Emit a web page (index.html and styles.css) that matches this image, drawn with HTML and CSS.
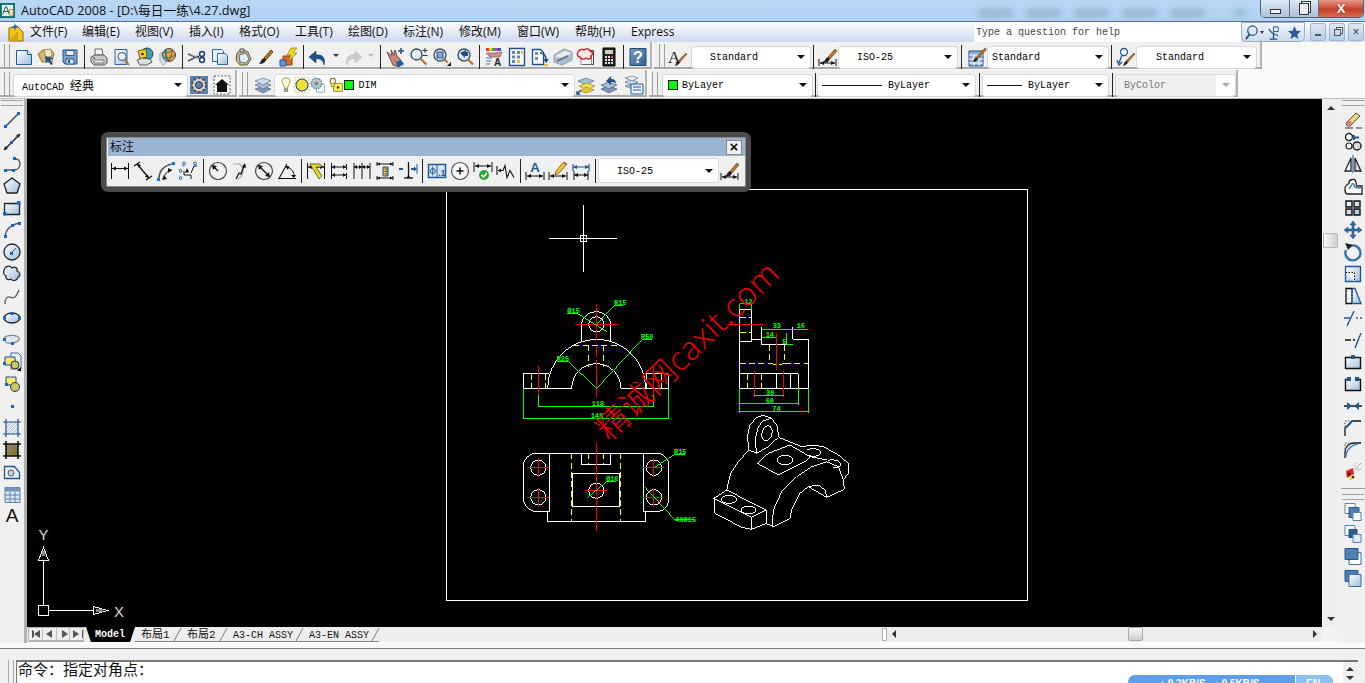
FILE: index.html
```html
<!DOCTYPE html>
<html lang="zh">
<head>
<meta charset="utf-8">
<title>AutoCAD 2008 - [D:\每日一练\4.27.dwg]</title>
<link rel="stylesheet" href="styles.css">
</head>
<body>
<svg class="defs" aria-hidden="true">
<defs>
<linearGradient id="gb" x1="0" y1="0" x2="1" y2="1"><stop offset="0" stop-color="#fff"/><stop offset="1" stop-color="#9dbcdb"/></linearGradient>
<linearGradient id="gy" x1="0" y1="0" x2="1" y2="1"><stop offset="0" stop-color="#fff7b0"/><stop offset="1" stop-color="#e0b820"/></linearGradient>
<linearGradient id="gd" x1="0" y1="0" x2="1" y2="1"><stop offset="0" stop-color="#7f9cbc"/><stop offset="1" stop-color="#2f5f94"/></linearGradient>
<symbol id="new" viewBox="0 0 20 20"><path d="M2.500 3.500h11l4 4v10h-15z" fill="url(#gb)" stroke="#1f5a96"/><path d="M13.500 3.500v4h4" fill="#fff" stroke="#1f5a96"/></symbol>
<symbol id="open" viewBox="0 0 20 20"><path d="M1 7l5-4h8l3 3-2 9H5z" fill="#d8b56c" stroke="#8d7443"/><path d="M7 3l7-1 1 7-6 2z" fill="#f3e7c4" stroke="#a5905c"/><path d="M8 9l8 2-3 2 3 4-2 1-3-4-2 2z" fill="#1f4f88"/></symbol>
<symbol id="save" viewBox="0 0 20 20"><path d="M3 3h14v14H5l-2-2z" fill="#7fa4cc" stroke="#27578f"/><path d="M6 3.500h8v5H6z" fill="#e8f0f8" stroke="#27578f"/><path d="M6 12h8v5H6z" fill="#dce6f0" stroke="#27578f"/><path d="M8 13h2v3H8z" fill="#27578f"/></symbol>
<symbol id="print" viewBox="0 0 20 20"><path d="M6 2h7l1 6H6z" fill="#f4f4f4" stroke="#666"/><path d="M2 10l4-2h9l3 3v5l-3 2H5l-3-3z" fill="#c6c8cc" stroke="#555"/><path d="M5 13h10v3H5z" fill="#ececec" stroke="#777"/><path d="M4 11h2" stroke="#333"/></symbol>
<symbol id="preview" viewBox="0 0 20 20"><path d="M3 2.500h12v15H3z" fill="url(#gb)" stroke="#2d679f"/><circle cx="10" cy="9.500" r="4" fill="#e4f0fa" stroke="#555"/><path d="M13 13l4 5" stroke="#b4722e" stroke-width="2"/></symbol>
<symbol id="publish" viewBox="0 0 20 20"><circle cx="12" cy="7" r="6" fill="#39a0b8" stroke="#245"/><path d="M3 4l8-2 1 8-7 2z" fill="#f5d020" stroke="#6d5a10"/><path d="M2 13l5-2 8 1 2 3-5 3H5z" fill="#dadde2" stroke="#555"/><circle cx="7.500" cy="7" r="1.300" fill="#333"/></symbol>
<symbol id="web" viewBox="0 0 20 20"><path d="M2 6l6-1v11l-3 2-3-4z" fill="#d8dfe8" stroke="#9ab"/><circle cx="11" cy="8" r="6.500" fill="#f0a030" stroke="#347"/><path d="M6 5c3 1 7 0 9-2M5 10c4 2 8 1 12-2" stroke="#2aa34a" stroke-width="1.500" fill="none"/><path d="M8 2c-1 4 0 9 3 12" stroke="#2a5fd0" stroke-width="1.500" fill="none"/><path d="M14 3c0 4-1 8-3 11" stroke="#d03030" fill="none"/></symbol>
<symbol id="cut" viewBox="0 0 20 20"><path d="M1 7l10 4M1 14l10-5" stroke="#555" stroke-width="1.500"/><path d="M2 6.500l9 4" stroke="#aaa"/><circle cx="15" cy="7" r="2.500" fill="none" stroke="#1e3f72" stroke-width="1.500"/><circle cx="15" cy="13" r="2.500" fill="none" stroke="#1e3f72" stroke-width="1.500"/><path d="M11 10l2-2M11 10l2 2" stroke="#1e3f72"/></symbol>
<symbol id="copy" viewBox="0 0 20 20"><path d="M2.500 2.500h9l2 2v10h-11z" fill="#eaf1f8" stroke="#2d679f"/><path d="M7.500 6.500h8l2 2v9h-10z" fill="url(#gb)" stroke="#2d679f"/></symbol>
<symbol id="paste" viewBox="0 0 20 20"><path d="M4 6l5-4 6 3 3 7-4 6-7 0-4-5z" fill="#d9b875" stroke="#5f5740"/><path d="M6 8l7-2 3 6-3 4-6-1z" fill="#dfeefa" stroke="#4878a8"/><path d="M7 2h4v3H7z" fill="#ccc" stroke="#555"/></symbol>
<symbol id="match" viewBox="0 0 20 20"><path d="M15 3l2 2-7 8-2-2z" fill="#b8742c" stroke="#6b3e10"/><path d="M8 11l2 2c-1 3-4 4-7 4 2-2 2-5 5-6z" fill="#222"/></symbol>
<symbol id="block" viewBox="0 0 20 20"><path d="M4 9h9v9H4z" fill="#e86a20" stroke="#8b3a10"/><path d="M1 13h6v6H1z" fill="#5b9be0" stroke="#1f4f88"/><path d="M12 1l6 0-4 5 4 0-9 9 3-7-4 0z" fill="#f5d820" stroke="#7a6a10" stroke-width=".6"/></symbol>
<symbol id="undo" viewBox="0 0 20 20"><path d="M16 18c2-6-1-11-8-10V4L1 10l7 6v-4c4-1 7 1 8 6z" fill="#1f4f88" stroke="#14365e" stroke-width=".5"/></symbol>
<symbol id="redo" viewBox="0 0 20 20"><path d="M4 18c-2-6 1-11 8-10V4l7 6-7 6v-4c-4-1-7 1-8 6z" fill="#c9cdd2" stroke="#b0b4b8" stroke-width=".5"/></symbol>
<symbol id="pan" viewBox="0 0 20 20"><path d="M1 5l5 4-1-6 3 5 1-5 2 6 3 3 2 5-3 3-6-2z" fill="#c8857a" stroke="#7d4a44"/><path d="M15 1v6M12 4h6" stroke="#1f4f88" stroke-width="1.500"/><path d="M10 15l5-2 3 4-3 2h-4z" fill="#1f5f9f"/></symbol>
<symbol id="zrt" viewBox="0 0 20 20"><circle cx="7.500" cy="7.500" r="5.500" fill="#dcecf8" stroke="#3a4a5a" stroke-width="1.300"/><path d="M11.500 11.500l6 6" stroke="#b4722e" stroke-width="2.200"/><path d="M16 1v5M13.500 3.500h5M13.500 8.500h5" stroke="#333"/></symbol>
<symbol id="zwin" viewBox="0 0 20 20"><circle cx="8" cy="8" r="6" fill="#dcecf8" stroke="#3a4a5a" stroke-width="1.300"/><path d="M5 5h6v6H5z" fill="#8aa8c8" stroke="#1f4f88"/><path d="M12.500 12.500l3 3" stroke="#b4722e" stroke-width="2.200"/><path d="M19 15v4h-4z" fill="#111"/></symbol>
<symbol id="zprev" viewBox="0 0 20 20"><circle cx="9" cy="8" r="6" fill="#dcecf8" stroke="#3a4a5a" stroke-width="1.300"/><path d="M13 12.500l5 5" stroke="#b4722e" stroke-width="2.200"/><path d="M5 6l6-3v2h2v4h-3v2z" fill="#1f4f88"/></symbol>
<symbol id="props" viewBox="0 0 20 20"><path d="M2 1h3v3H2z" fill="#e03030"/><path d="M5 1h3v3H5z" fill="#e0d020"/><path d="M8 1h3v3H8z" fill="#30b030"/><path d="M11 1h3v3h-3z" fill="#d030c0"/><path d="M14 1h3v3h-3z" fill="#3050d0"/><path d="M2 6h9l7-1-2 5H6z" fill="#d09088" stroke="#7d4a44" stroke-width=".6"/><path d="M2 11h6M2 14h5M2 17h4" stroke="#3a7ab0"/><text x="10" y="19" class="ict">A</text></symbol>
<symbol id="dc" viewBox="0 0 20 20"><path d="M2.500 1.500h15v17h-15z" fill="#fff" stroke="#1f4f88" stroke-width="1.400"/><path d="M5 4h3v3H5zM10 4h3v3h-3zM5 8.500h3v3H5zM10 8.500h3v3h-3zM5 13h3v3H5z" fill="#5e86b4"/><path d="M10 13h3v3h-3zM14 4h2v3h-2z" fill="#e8c020"/></symbol>
<symbol id="tool" viewBox="0 0 20 20"><path d="M2.500 2.500h8l3 3v12h-11z" fill="#fff" stroke="#1f4f88" stroke-width="1.300"/><path d="M5 5h3v3H5zM5 10h3v3H5z" fill="#6e90b8"/><path d="M10 6c4 0 6 3 6 7" fill="none" stroke="#1f4f88" stroke-width="1.500"/><path d="M13 12h6l-3 4z" fill="#1f4f88"/><path d="M14 17h4v2h-4z" fill="#e8c020"/></symbol>
<symbol id="sheet" viewBox="0 0 20 20"><path d="M1 8l10-6 8 3v8l-10 5-8-3z" fill="#b8c2cc" stroke="#8b97a3"/><path d="M2 9l10-5 6 2-9 5z" fill="#e8edf2"/><path d="M4 14l11-5" stroke="#6d7a87" stroke-width="2"/><path d="M6 17l12-6" stroke="#9ec0dc" stroke-width="2"/></symbol>
<symbol id="markup" viewBox="0 0 20 20"><path d="M7 3.500h10.500v14H7z" fill="#f4f4f4" stroke="#444"/><path d="M5 5.500h10.500v12H5z" fill="#fff" stroke="#444" stroke-width=".6"/><path d="M2 5c1-3 5-3 6-2 2-2 6-1 6 1 3 0 3 4 1 5 1 3-3 4-5 2-2 2-6 1-6-1-3 0-3-3-2-5z" fill="#fbe8e8" stroke="#d82020" stroke-width="1.400"/></symbol>
<symbol id="calc" viewBox="0 0 20 20"><path d="M4 1h12v18H4z" fill="#222" stroke="#000"/><path d="M6 3h8v4H6z" fill="#c4d8b8"/><path d="M6 9h2v2H6zM9 9h2v2H9zM6 12h2v2H6zM9 12h2v2H9zM6 15h2v2H6zM9 15h2v2H9zM12 12h2v2h-2zM12 15h2v2h-2z" fill="#ddd"/><path d="M12 9h2v2h-2z" fill="#e04030"/></symbol>
<symbol id="help" viewBox="0 0 20 20"><path d="M2 1.500h16v17H2z" fill="url(#gd)" stroke="#1d4a7c"/><text x="10" y="16" class="ich">?</text></symbol>
<symbol id="tstyle" viewBox="0 0 20 20"><text x="0" y="16" class="ita">A</text><path d="M18 6l1 1-7 8-2-1z" fill="#b8742c" stroke="#6b3e10" stroke-width=".5"/><path d="M10 14l2 1c-1 3-3 3-5 4 1-2 1-4 3-5z" fill="#222"/></symbol>
<symbol id="dstyle" viewBox="0 0 20 20"><path d="M1 12v7M18 12v7M2 16h15" stroke="#111"/><path d="M2 16l4-2v4zM17 16l-4-2v4z" fill="#111"/><path d="M17 2l2 2-7 8-2-2z" fill="#b8742c" stroke="#6b3e10" stroke-width=".6"/><path d="M10 10l2 2c-1 3-4 4-7 4 2-2 2-5 5-6z" fill="#222"/></symbol>
<symbol id="tbst" viewBox="0 0 20 20"><path d="M2 4h14v15H2z" fill="#8fb0d4" stroke="#1f4f88"/><path d="M2 8h14M2 12h14M2 16h14M7 8v11M12 8v11" stroke="#fff"/><path d="M18 1l1.500 1.500-8 9-2-1.500z" fill="#b8742c" stroke="#6b3e10" stroke-width=".6"/><path d="M9 10.500l2 1.500c-1 2-3 3-5 3 1-2 1-4 3-4.500z" fill="#222"/></symbol>
<symbol id="mlst" viewBox="0 0 20 20"><circle cx="8" cy="5" r="3.500" fill="#fff" stroke="#1f5a96" stroke-width="1.300"/><path d="M6 8l-3 8M1 13l2 5 3-3" fill="none" stroke="#1f5a96" stroke-width="1.300"/><path d="M18 6l1 1-7 8-2-1z" fill="#b8742c" stroke="#6b3e10" stroke-width=".6"/><path d="M10 14l2 1c-1 3-3 3-5 4 1-2 1-4 3-5z" fill="#222"/></symbol>
<symbol id="gear" viewBox="0 0 20 20"><path d="M1 1h18v18H1z" fill="#5b83ad"/><circle cx="10" cy="10" r="7" fill="#d9d9d9" stroke="#555" stroke-width="2" stroke-dasharray="3 1.500"/><circle cx="10" cy="10" r="3.500" fill="#5b83ad" stroke="#333"/></symbol>
<symbol id="lock" viewBox="0 0 20 20"><path d="M2 1h16v18H2z" fill="#fff" stroke="#555" stroke-dasharray="2 1.500"/><path d="M10 4l7 6h-2v7H5v-7H3z" fill="#111"/></symbol>
<symbol id="layers" viewBox="0 0 20 20"><path d="M10 11l8 3-8 4-8-4z" fill="#7e99b8" stroke="#44617e" stroke-width=".6"/><path d="M10 7l8 3-8 4-8-4z" fill="#a8bdd4" stroke="#44617e" stroke-width=".6"/><path d="M10 3l8 3-8 4-8-4z" fill="#cfdbe8" stroke="#44617e" stroke-width=".6"/></symbol>
<symbol id="bulb" viewBox="0 0 20 20"><path d="M10 1c4 0 5 3 5 5 0 3-3 4-3 8H8c0-4-3-5-3-8 0-2 1-5 5-5z" fill="#fffbe0" stroke="#a89020" stroke-width="1.200"/><path d="M8 15h4v3H8z" fill="#ccc" stroke="#666"/></symbol>
<symbol id="sun" viewBox="0 0 20 20"><path d="M1 1h18v18H1z" fill="#fff" stroke="#c8b020" stroke-dasharray="2 2"/><circle cx="10" cy="10" r="7.500" fill="#f8df38" stroke="#1f4f88" stroke-width="1.300"/></symbol>
<symbol id="freeze" viewBox="0 0 20 20"><path d="M8 9h10v10H8z" fill="#fff" stroke="#7b94ad"/><circle cx="8" cy="8" r="6.500" fill="#c2cbb8" stroke="#5f8fbd" stroke-width="2" stroke-dasharray="2 1"/><circle cx="8" cy="8" r="2.500" fill="#5f8fbd"/></symbol>
<symbol id="padlock" viewBox="0 0 20 20"><path d="M3 8V4c0-3 6-3 6 0v4" fill="none" stroke="#8a7a10" stroke-width="1.500"/><path d="M7 8h11v10H7z" fill="#f8e858" stroke="#8a7a10"/><path d="M4 8h4v4H4z" fill="#f8e858" stroke="#8a7a10"/><circle cx="12.500" cy="13" r="1.500" fill="#333"/></symbol>
<symbol id="lyrprev" viewBox="0 0 20 20"><path d="M10 3l8 3-8 4-8-4z" fill="#a8bdd4" stroke="#44617e" stroke-width=".6"/><path d="M11 8l8 3-8 4-8-4z" fill="#f2dc50" stroke="#8a7a10" stroke-width=".6"/><path d="M10 12l8 3-8 3-6-2z" fill="#e8c828" stroke="#8a7a10" stroke-width=".6"/><path d="M1 19l4-4M1 16v3h3" stroke="#1f4f88" stroke-width="1.300" fill="none"/></symbol>
<symbol id="lyrst" viewBox="0 0 20 20"><path d="M9 11l8 3-8 4-8-4z" fill="#7e99b8" stroke="#33485e" stroke-width=".6"/><path d="M9 7l8 3-8 4-8-4z" fill="#a8bdd4" stroke="#33485e" stroke-width=".6"/><path d="M6 6l5-5v3c4 0 5 2 5 5-1-2-3-2-5-2v3z" fill="#1f4f88"/></symbol>
<symbol id="lyrw" viewBox="0 0 20 20"><path d="M8 9l6 2-6 3-7-3z" fill="#a8bdd4" stroke="#44617e" stroke-width=".6"/><path d="M8 5l6 2-6 3-7-3z" fill="#cfdbe8" stroke="#44617e" stroke-width=".6"/><path d="M8 1l6 2-6 3-7-3z" fill="#e8eef5" stroke="#44617e" stroke-width=".6"/><path d="M7 9h12v10H7z" fill="#eaf1f8" stroke="#1f5a96"/><path d="M9 12h8M9 15h8" stroke="#1f5a96"/></symbol>

<symbol id="dl" viewBox="0 0 20 20"><path d="M1.500 2v16M18.500 2v16M2 7.500h16" stroke="#111" fill="none"/><path d="M2 7.500l4-2v4zM18 7.500l-4-2v4z" fill="#111"/></symbol>
<symbol id="da" viewBox="0 0 20 20"><path d="M1 5l6-4M13 19l6-4M4 3l12 14" stroke="#111" stroke-width="1.300"/><path d="M4 3l4 1-2 3zM16 17l-4-1 2-3z" fill="#111"/></symbol>
<symbol id="dar" viewBox="0 0 20 20"><path d="M3 18C3 10 8 4 17 3" fill="none" stroke="#555" stroke-width="1.600"/><path d="M8 18c0-5 3-8 8-9" fill="none" stroke="#111"/><path d="M6 19l2-5 3 4zM16 9l-4-2v5z" fill="#111"/><path d="M16 1h3v3h-3zM1 17h3v3H1z" fill="#1677d2"/></symbol>
<symbol id="dord" viewBox="0 0 20 20"><path d="M12 12l3-7 3 0M5 10v4h7v4" fill="none" stroke="#111"/><path d="M8 7l2 4-4 1z" fill="#111"/><text x="3" y="6" class="ict2">x</text><circle cx="5" cy="2.500" r="1.400" fill="none" stroke="#1f5fa8"/><circle cx="16" cy="2.500" r="1.400" fill="none" stroke="#1f5fa8"/><circle cx="1.500" cy="10" r="1.400" fill="none" stroke="#1f5fa8"/><circle cx="1.500" cy="17" r="1.400" fill="none" stroke="#1f5fa8"/></symbol>
<symbol id="drad" viewBox="0 0 20 20"><circle cx="10" cy="10" r="8.500" fill="#f3f3f3" stroke="#444" stroke-width="1.200"/><path d="M10 10L5 5" stroke="#111" stroke-width="1.300"/><path d="M4 4l5 1-4 4z" fill="#111"/></symbol>
<symbol id="djog" viewBox="0 0 20 20"><path d="M7 2a9 9 0 0 1 0 16" fill="none" stroke="#bbb" stroke-width="1.500"/><path d="M5 18l3-6 2 1 3-8" fill="none" stroke="#111" stroke-width="1.300"/><path d="M14 2l1 5-4-1z" fill="#111"/><path d="M2 3h6" stroke="#bbb"/></symbol>
<symbol id="ddia" viewBox="0 0 20 20"><circle cx="10" cy="10" r="8.500" fill="#f3f3f3" stroke="#444" stroke-width="1.200"/><path d="M5 5l10 10" stroke="#111" stroke-width="1.300"/><path d="M4 4l5 1-4 4zM16 16l-5-1 4-4z" fill="#111"/></symbol>
<symbol id="dang" viewBox="0 0 20 20"><path d="M1 17.500h18M2 17.500L10 3" stroke="#111" fill="none" stroke-width="1.100"/><path d="M10 6a9 9 0 0 1 7 10" fill="none" stroke="#111"/><path d="M8 5l4 0-1 4zM17 17l-3-3h5z" fill="#111"/></symbol>
<symbol id="dq" viewBox="0 0 20 20"><path d="M1.500 2v16M18.500 2v16M2 6h16" stroke="#111" fill="none"/><path d="M2 6l4-2v4zM18 6l-4-2v4z" fill="#111"/><path d="M4 3l9 15 3-3-6-9h6l-2-3z" fill="#f0d818" stroke="#333" stroke-width=".7"/></symbol>
<symbol id="dbase" viewBox="0 0 20 20"><path d="M2.500 2v16M17.500 3v6M17.500 12v6M3 6h14M3 14h14" stroke="#111" fill="none"/><path d="M3 6l3-2v4zM17 6l-3-2v4zM3 14l3-2v4zM17 14l-3-2v4z" fill="#111"/></symbol>
<symbol id="dcont" viewBox="0 0 20 20"><path d="M2 2v16M10 2v16M18 2v16M2 6h16" stroke="#111" fill="none"/><path d="M2 6l3-2v4zM10 6l-3-2v4zM10 6l3-2v4zM18 6l-3-2v4z" fill="#111"/></symbol>
<symbol id="dsp" viewBox="0 0 20 20"><path d="M2 3h16M2 17h16M2 1v4M18 1v4M2 15v4M18 15v4" stroke="#111" fill="none"/><path d="M2 3l3-1.500v3zM18 3l-3-1.500v3zM2 17l3-1.500v3zM18 17l-3-1.500v3z" fill="#111"/><path d="M8 6h5v9H8z" fill="#e8b838" stroke="#1f4f88"/><path d="M10 8h3M10 10.500h3M10 13h3" stroke="#1f4f88"/></symbol>
<symbol id="dbrk" viewBox="0 0 20 20"><path d="M10.500 1v15" stroke="#111" stroke-width="1.300"/><path d="M6 17h9" stroke="#111" stroke-width="1.300"/><path d="M10.500 14l-2 3h4z" fill="#111"/><path d="M1 8h4" stroke="#1f5a96" stroke-width="2"/><path d="M13 8h4" stroke="#1f5a96" stroke-width="2"/><path d="M19 8l-3-2.500v5z" fill="#1f5a96"/><path d="M19 3v10" stroke="#1f5a96"/></symbol>
<symbol id="dtol" viewBox="0 0 20 20"><path d="M1.500 3.500h17v13h-17z" fill="#d8e6f3" stroke="#1f5a96" stroke-width="1.500"/><path d="M10 4v12" stroke="#1f5a96"/><circle cx="5.700" cy="10" r="2.500" fill="none" stroke="#1f5a96"/><path d="M5.700 5.500v9" stroke="#1f5a96"/><text x="11" y="14.500" class="ict3">.1</text></symbol>
<symbol id="dcen" viewBox="0 0 20 20"><circle cx="10" cy="10" r="8.500" fill="#f6f6f6" stroke="#555" stroke-width="1.200"/><path d="M10 6.500v7M6.500 10h7" stroke="#111" stroke-width="1.500"/></symbol>
<symbol id="dins" viewBox="0 0 20 20"><path d="M1 1v10M19 1v10M2 5h16" stroke="#111"/><path d="M2 5l4-2v4zM18 5l-4-2v4z" fill="#111"/><circle cx="11" cy="14" r="5" fill="#2fa838"/><path d="M8.500 14l2 2 3.500-4" stroke="#fff" stroke-width="1.500" fill="none"/></symbol>
<symbol id="djl" viewBox="0 0 20 20"><path d="M1 5v9M2 9.500h5l2-5 2 12 3-7 4 7" fill="none" stroke="#111" stroke-width="1.100"/><path d="M2 9.500l3-2v4z" fill="#111"/></symbol>
<symbol id="dtxt" viewBox="0 0 20 20"><text x="10" y="11" class="idt">A</text><path d="M1 11v8M19 11v8M2 15h16" stroke="#111"/><path d="M2 15l4-2v4zM18 15l-4-2v4z" fill="#111"/></symbol>
<symbol id="dedit" viewBox="0 0 20 20"><path d="M1 11v8M19 11v8M2 15h16" stroke="#111"/><path d="M2 15l4-2v4zM18 15l-4-2v4z" fill="#111"/><path d="M16 1l3 2-8 9-4 2 1-4z" fill="#f0cc30" stroke="#704018" stroke-width=".8"/><path d="M16 1l3 2-1 1-3-2z" fill="#d05040"/></symbol>
<symbol id="dupd" viewBox="0 0 20 20"><path d="M2 3v7M18 3v7M2 6h16" stroke="#1f5a96" stroke-width="1.200"/><path d="M2 6l4-2v4zM18 6l-4-2v4z" fill="#1f5a96"/><path d="M3 10v9M17 10v9M3 14h14" stroke="#111"/><path d="M3 14l4-2v4zM17 14l-4-2v4z" fill="#111"/></symbol>

<symbol id="line" viewBox="0 0 20 20"><path d="M4 16L16 4" stroke="#444" stroke-width="1.400"/><path d="M2 15h3v3H2zM15 2h3v3h-3z" fill="#1167c8"/></symbol>
<symbol id="xline" viewBox="0 0 20 20"><path d="M2 18L18 2" stroke="#222" stroke-width="1.400"/><path d="M2 18l1-4 3 3zM18 2l-4 1 3 3z" fill="#222"/><path d="M8 9h3v3H8z" fill="#1167c8"/></symbol>
<symbol id="pline" viewBox="0 0 20 20"><path d="M3 16h9c3 0 6-2 6-6s-3-5-5-5" fill="none" stroke="#555" stroke-width="1.300"/><path d="M2 15h3v3H2zM10 15h3v3h-3zM11 3h3v3h-3z" fill="#1167c8"/></symbol>
<symbol id="poly" viewBox="0 0 20 20"><path d="M10 2l8 6-3 9H5L2 8z" fill="url(#gb)" stroke="#222" stroke-width="1.300"/></symbol>
<symbol id="rect" viewBox="0 0 20 20"><path d="M2.500 5.500h15v11h-15z" fill="url(#gb)" stroke="#222" stroke-width="1.300"/><path d="M15 3h3.500v3.500H15zM1 14h3.500v3.500H1z" fill="#1167c8"/></symbol>
<symbol id="arc" viewBox="0 0 20 20"><path d="M3 18C3 10 9 5 17 3" fill="none" stroke="#555" stroke-width="1.300"/><path d="M2 15h3v3H2zM9 4h3v3H9zM16 2h3v3h-3z" fill="#1167c8"/></symbol>
<symbol id="circ" viewBox="0 0 20 20"><circle cx="10" cy="10" r="8" fill="url(#gb)" stroke="#222" stroke-width="1.300"/><path d="M9 11l5-5" stroke="#555"/><path d="M8 10h3v3H8z" fill="#1167c8"/></symbol>
<symbol id="cloud" viewBox="0 0 20 20"><path d="M3 4c2-3 6-2 7 0 3-2 6 0 5 3 3 1 4 5 1 6 0 3-5 5-7 2-3 2-6-1-5-3-3-1-3-5-1-8z" fill="url(#gb)" stroke="#222" stroke-width="1.200"/></symbol>
<symbol id="spline" viewBox="0 0 20 20"><path d="M3 18c0-5 2-8 5-7 3 2 6 1 9-7" fill="none" stroke="#555" stroke-width="1.300"/></symbol>
<symbol id="ell" viewBox="0 0 20 20"><ellipse cx="10" cy="10" rx="8" ry="5" fill="url(#gb)" stroke="#222" stroke-width="1.300"/><path d="M1 8.500h3v3H1zM16 8.500h3v3h-3zM8.500 4h3v3h-3z" fill="#1167c8"/></symbol>
<symbol id="elarc" viewBox="0 0 20 20"><path d="M2 8c2-3 13-4 15 0s-9 7-14 4" fill="#dfe7ef" stroke="#888" stroke-width="1.300"/><path d="M1 8h3v3H1zM9 12h3v3H9z" fill="#1167c8"/></symbol>
<symbol id="ins" viewBox="0 0 20 20"><path d="M9 1h7l3 3v13H9z" fill="#eef3f8" stroke="#3d6f9f"/><path d="M3 5h10v8H3z" fill="#f5e870" stroke="#1f4f88"/><circle cx="13" cy="13" r="4" fill="#c8c868" stroke="#333"/><path d="M1 10h3v3H1z" fill="#1167c8"/><path d="M19 15v4h-4z" fill="#111"/></symbol>
<symbol id="blk" viewBox="0 0 20 20"><path d="M4 3h10v8H4z" fill="#f5e870" stroke="#1f4f88"/><circle cx="13" cy="13" r="4.500" fill="#c8c868" stroke="#333"/><path d="M3 9h3v3H3z" fill="#1167c8"/></symbol>
<symbol id="pt" viewBox="0 0 20 20"><path d="M9 9h3v3H9z" fill="#1167c8"/></symbol>
<symbol id="hat" viewBox="0 0 20 20"><path d="M4 4h12v12H4z" fill="#c5d4e4"/><path d="M4 8l4-4M4 12l8-8M4 16L16 4M8 16l8-8M12 16l4-4" stroke="#fff"/><path d="M1 4h18M1 16h18M4 1v18M16 1v18" stroke="#1f4f88" stroke-width="1.200" fill="none"/></symbol>
<symbol id="grad" viewBox="0 0 20 20"><path d="M4 4h12v12H4z" fill="url(#gy)"/><path d="M4 4h12v12H4z" fill="#333" opacity=".55"/><path d="M1 4h18M1 16h18M4 1v18M16 1v18" stroke="#111" stroke-width="1.600" fill="none"/></symbol>
<symbol id="regn" viewBox="0 0 20 20"><path d="M2.500 4.500h10l5 6v6h-15z" fill="#e8f0f7" stroke="#1f5a96" stroke-width="1.300"/><circle cx="9" cy="11" r="3" fill="#c8d4df" stroke="#555"/></symbol>
<symbol id="tbl" viewBox="0 0 20 20"><path d="M3 3.500h15v15H3z" fill="#dce6f2" stroke="#5a83ae"/><path d="M3 3.500h15v4H3z" fill="#6f95c0"/><path d="M3 11h15M3 15h15M8 7.500v11M13 7.500v11" stroke="#5a83ae"/></symbol>

<symbol id="erase" viewBox="0 0 20 20"><path d="M3 13L13 3l4 3-10 10-3 0z" fill="#f0d070" stroke="#555"/><path d="M3 13l3 3 3-3-3-3z" fill="#e87870"/><path d="M13 18h6M2 18h8" stroke="#333"/></symbol>
<symbol id="cpy" viewBox="0 0 20 20"><circle cx="6" cy="5" r="3.500" fill="#fff" stroke="#222" stroke-width="1.400"/><circle cx="14" cy="14" r="4" fill="#d4dbe2" stroke="#222" stroke-width="1.400"/><circle cx="6" cy="14" r="3" fill="#fff" stroke="#222" stroke-width="1.200"/><path d="M11 3v5M9 5.500h7" stroke="#1f5a96" stroke-width="1.800"/></symbol>
<symbol id="mir" viewBox="0 0 20 20"><path d="M8 4v13H2z" fill="#fff" stroke="#222" stroke-width="1.300"/><path d="M12 4v13h6z" fill="#cdd8e3" stroke="#222" stroke-width="1.300"/><path d="M10 1v18" stroke="#2f70b0" stroke-width="1.300"/></symbol>
<symbol id="off" viewBox="0 0 20 20"><path d="M2 12c0-3 3-3 4-5 0-4 6-5 7-1 1 2-1 3 1 4h5v8H4c-2 0-2-3-2-6z" fill="#fff" stroke="#222" stroke-width="1.300"/><path d="M6 13c1-2 3-3 3-5 1-1 2 0 2 1 0 3 3 3 7 3" fill="none" stroke="#2f70b0" stroke-width="1.300"/></symbol>
<symbol id="arr" viewBox="0 0 20 20"><path d="M3 3h6v6H3zM11 3h6v6h-6zM3 11h6v6H3zM11 11h6v6h-6z" fill="url(#gb)" stroke="#111" stroke-width="1.400"/></symbol>
<symbol id="mov" viewBox="0 0 20 20"><path d="M10 1l3 4h-2v4h4V7l4 3-4 3v-2h-4v4h2l-3 4-3-4h2v-4H5v2l-4-3 4-3v2h4V5H7z" fill="#2f6aa4" stroke="#1f4f78" stroke-width=".5"/></symbol>
<symbol id="rot" viewBox="0 0 20 20"><path d="M7 4a7.500 7.500 0 1 1-4 4" fill="none" stroke="#3a73ab" stroke-width="2.400"/><path d="M2 1l8 2-5 5z" fill="#222"/></symbol>
<symbol id="scl" viewBox="0 0 20 20"><path d="M2.500 2.500h15v15h-15z" fill="url(#gb)" stroke="#1f5a96" stroke-width="1.300"/><path d="M2.500 8.500h9v9" fill="#fff" stroke="#111" stroke-dasharray="1.500 1.500"/></symbol>
<symbol id="str" viewBox="0 0 20 20"><path d="M9 2.500h3l6 15H9z" fill="url(#gb)" stroke="#1f5a96" stroke-width="1.300"/><path d="M9 2.500H3v15h6" fill="none" stroke="#111" stroke-width="1.300"/><path d="M9 2.500v15" stroke="#111" stroke-dasharray="1.500 1.500"/></symbol>
<symbol id="trm" viewBox="0 0 20 20"><path d="M1 10h6M13 10h2M17 10h2" stroke="#1f5a96" stroke-width="1.300"/><path d="M4 18l7-15" stroke="#1f5a96" stroke-width="1.400"/></symbol>
<symbol id="ext" viewBox="0 0 20 20"><path d="M2 10h6M10 10h2" stroke="#111" stroke-width="1.300"/><path d="M12 18l6-15" stroke="#1f5a96" stroke-width="1.400"/></symbol>
<symbol id="br1" viewBox="0 0 20 20"><path d="M2.500 5.500h15v11h-15z" fill="url(#gb)" stroke="#111" stroke-width="1.400"/><path d="M8 3h4v4H8z" fill="#1f5a96"/></symbol>
<symbol id="br2" viewBox="0 0 20 20"><path d="M6 5.500H2.500v11h15v-11H14" fill="url(#gb)" stroke="#111" stroke-width="1.400"/><path d="M4 3h4v4H4zM12 3h4v4h-4z" fill="#1f5a96"/></symbol>
<symbol id="joi" viewBox="0 0 20 20"><path d="M1 10h18" stroke="#111" stroke-width="1.500"/><path d="M4 6l5 4-5 4zM16 6l-5 4 5 4z" fill="#1f5a96"/></symbol>
<symbol id="chm" viewBox="0 0 20 20"><path d="M2 18V10L9 3h9" fill="none" stroke="#111" stroke-width="1.300"/><path d="M2 9V3h6" fill="none" stroke="#555" stroke-dasharray="1.500 1.500"/><path d="M2 11L10 3" stroke="#2f70b0" stroke-width="1.300"/></symbol>
<symbol id="fil" viewBox="0 0 20 20"><path d="M2 18v-6c0-5 4-9 9-9h7" fill="none" stroke="#111" stroke-width="1.300"/><path d="M3 17c0-7 5-12 12-13" fill="none" stroke="#4a88c8" stroke-width="1.600"/><path d="M2 9V3h6" fill="none" stroke="#555" stroke-dasharray="1.500 1.500"/></symbol>
<symbol id="exp" viewBox="0 0 20 20"><path d="M3 9l7-3 1 6-7 4z" fill="#e02818"/><path d="M8 13l4 3-6 3z" fill="#f0c820"/><path d="M12 7l6-6M14 8l4-1M11 4l2-3" stroke="#aab" stroke-width="1.300" stroke-dasharray="1.500 1"/><circle cx="6" cy="12" r="1.500" fill="#222"/><circle cx="10" cy="15" r="1.200" fill="#222"/></symbol>
<symbol id="do1" viewBox="0 0 20 20"><path d="M2 1.500h10v10H2z" fill="#fff" stroke="#5a83ae"/><path d="M6 5.500h10v10H6z" fill="#4f7fb0" stroke="#27578f"/><path d="M10 10.500h8v8h-8z" fill="#fff" stroke="#5a83ae"/></symbol>
<symbol id="do2" viewBox="0 0 20 20"><path d="M2 1.500h10v10H2z" fill="#fff" stroke="#5a83ae"/><path d="M6 5.500h8v8H6z" fill="#2c5f96" stroke="#1d4a7c"/><path d="M10 10.500h8v8h-8z" fill="#dfe9f2" stroke="#5a83ae"/></symbol>
<symbol id="do3" viewBox="0 0 20 20"><path d="M6 6.500h12v12H6z" fill="#fff" stroke="#3d6f9f"/><path d="M2 2.500h13v11H2z" fill="#4f7fb0" stroke="#27578f"/></symbol>
<symbol id="do4" viewBox="0 0 20 20"><path d="M2 2.500h13v11H2z" fill="#4f7fb0" stroke="#27578f"/><path d="M6 6.500h12v12H6z" fill="url(#gb)" stroke="#3d6f9f"/></symbol>
</defs>
</svg>

<div class="app">
  <header class="title">
    <svg class="title-icon" viewBox="0 0 16 16"><path d="M0 0h16v16H0z" fill="#0c6f64"/><path d="M2 2h12v12H2z" fill="#e6f2ee"/><path d="M3 12l3-8h1l3 8M4 9h5" stroke="#0c4f54" fill="none"/><path d="M10 7h4v6h-4z" fill="none" stroke="#c09020"/></svg>
    <span class="title-text">AutoCAD 2008 - [D:\每日一练\4.27.dwg]</span>
    <div class="smudges"><i></i><i></i><i></i><i></i><i></i><i class="smg"></i></div>
    <div class="wc">
      <div class="wb wb-min"><span class="minbar"></span></div>
      <div class="wb wb-max"><span class="maxbox"></span></div>
      <div class="wb wb-close">X</div>
    </div>
  </header>

  <nav class="menu">
    <svg class="menu-icon" viewBox="0 0 18 20"><path d="M2 6l8-2 6 6v9H2z" fill="#f5c518" stroke="#8a6c10"/><path d="M2 18L11 9v10H2z" fill="#e0a010"/><path d="M8 1l1 3 3 1-3 1-1 3-1-3-3-1 3-1z" fill="#2a6ab0"/></svg>
    <span class="mi mi1">文件(F)</span><span class="mi mi2">编辑(E)</span><span class="mi mi3">视图(V)</span><span class="mi mi4">插入(I)</span><span class="mi mi5">格式(O)</span><span class="mi mi6">工具(T)</span><span class="mi mi7">绘图(D)</span><span class="mi mi8">标注(N)</span><span class="mi mi9">修改(M)</span><span class="mi mi10">窗口(W)</span><span class="mi mi11">帮助(H)</span><span class="mi mi12">Express</span>
    <div class="help-box">Type a question for help</div>
    <div class="help-tools">
      <svg class="ht" viewBox="0 0 16 16"><circle cx="9" cy="6" r="5" fill="#dbe9f7" stroke="#1f4f88" stroke-width="1.300"/><path d="M6 10l-4 5" stroke="#1f4f88" stroke-width="2"/></svg>
      <span class="ht-drop"></span>
      <svg class="ht" viewBox="0 0 16 16"><path d="M3 4c3 5 6 7 10 7" fill="#cfe0f0" stroke="#1f4f88" stroke-width="1.300"/><path d="M8 2h5v5H8z" fill="none" stroke="#1f4f88"/><path d="M8 8v7M4 15h8" stroke="#1f4f88" stroke-width="1.300"/></svg>
      <svg class="ht ht-star" viewBox="0 0 16 16"><path d="M8 1l2 5 5 .5-4 3.500 1.300 5L8 12.300 3.700 15 5 10 1 6.500 6 6z" fill="#2c5a94"/></svg>
    </div>
    <div class="mdi">
      <div class="mdb"><span class="m-min"></span></div>
      <div class="mdb"><span class="m-res"></span></div>
      <div class="mdb mdb-x">×</div>
    </div>
  </nav>

  <div class="row">
    <div class="tb tb1">
      <span class="grip"></span>
      <div class="btn"><svg class="ic"><use href="#new"/></svg></div><div class="btn"><svg class="ic"><use href="#open"/></svg></div><div class="btn"><svg class="ic"><use href="#save"/></svg></div>
      <span class="sep"></span>
      <div class="btn"><svg class="ic"><use href="#print"/></svg></div><div class="btn"><svg class="ic"><use href="#preview"/></svg></div><div class="btn"><svg class="ic"><use href="#publish"/></svg></div><div class="btn"><svg class="ic"><use href="#web"/></svg></div>
      <span class="sep"></span>
      <div class="btn"><svg class="ic"><use href="#cut"/></svg></div><div class="btn"><svg class="ic"><use href="#copy"/></svg></div><div class="btn"><svg class="ic"><use href="#paste"/></svg></div><div class="btn"><svg class="ic"><use href="#match"/></svg></div><div class="btn"><svg class="ic"><use href="#block"/></svg></div>
      <span class="sep"></span>
      <div class="btn"><svg class="ic"><use href="#undo"/></svg></div><span class="drop"></span><div class="btn"><svg class="ic"><use href="#redo"/></svg></div><span class="drop drop-off"></span>
      <span class="sep sep8"></span>
      <div class="btn"><svg class="ic"><use href="#pan"/></svg></div><div class="btn"><svg class="ic"><use href="#zrt"/></svg></div><div class="btn"><svg class="ic"><use href="#zwin"/></svg></div><div class="btn"><svg class="ic"><use href="#zprev"/></svg></div>
      <span class="sep"></span>
      <div class="btn"><svg class="ic"><use href="#props"/></svg></div><div class="btn"><svg class="ic"><use href="#dc"/></svg></div><div class="btn"><svg class="ic"><use href="#tool"/></svg></div><div class="btn"><svg class="ic"><use href="#sheet"/></svg></div><div class="btn"><svg class="ic"><use href="#markup"/></svg></div><div class="btn"><svg class="ic"><use href="#calc"/></svg></div>
      <span class="sep"></span>
      <div class="btn"><svg class="ic"><use href="#help"/></svg></div>
    </div>
    <div class="tb tb2">
      <span class="grip"></span>
      <div class="btn"><svg class="ic"><use href="#tstyle"/></svg></div>
      <div class="combo c118 cm"><span class="ct ct-std">Standard</span><span class="arrow"></span></div>
      <span class="sep"></span>
      <div class="btn"><svg class="ic"><use href="#dstyle"/></svg></div>
      <div class="combo c118"><span class="ct ct-iso">ISO-25</span><span class="arrow"></span></div>
      <span class="sep sep8"></span>
      <div class="btn"><svg class="ic"><use href="#tbst"/></svg></div>
      <div class="combo c120"><span class="ct ct-tab">Standard</span><span class="arrow"></span></div>
      <span class="sep"></span>
      <div class="btn"><svg class="ic"><use href="#mlst"/></svg></div>
      <div class="combo c119"><span class="ct ct-std2">Standard</span><span class="arrow"></span></div>
    </div>
  </div>

  <div class="row">
    <div class="tb tb3">
      <span class="grip"></span>
      <div class="combo c173"><span class="ct ct-ws">AutoCAD <span class="cjk">经典</span></span><span class="arrow"></span></div>
      <div class="btn"><svg class="ic"><use href="#gear"/></svg></div><div class="btn"><svg class="ic"><use href="#lock"/></svg></div>
    </div>
    <div class="tb tb4">
      <span class="grip"></span>
      <div class="btn"><svg class="ic"><use href="#layers"/></svg></div>
      <div class="combo c299">
        <svg class="li"><use href="#bulb"/></svg><svg class="li"><use href="#sun"/></svg><svg class="li"><use href="#freeze"/></svg><svg class="li li-l"><use href="#padlock"/></svg>
        <span class="swatch"></span><span class="ct">DIM</span><span class="arrow"></span>
      </div>
      <div class="btn btn24"><svg class="ic"><use href="#lyrprev"/></svg></div><div class="btn btn24"><svg class="ic"><use href="#lyrst"/></svg></div><div class="btn btn24"><svg class="ic"><use href="#lyrw"/></svg></div>
    </div>
    <div class="tb tb5">
      <span class="grip"></span>
      <div class="combo c149"><span class="swatch swatch-c"></span><span class="ct">ByLayer</span><span class="arrow"></span></div>
      <span class="sep"></span>
      <div class="combo c157"><span class="lt lt60"></span><span class="ct">ByLayer</span><span class="arrow"></span></div>
      <span class="sep sep8"></span>
      <div class="combo c125"><span class="lt lt35"></span><span class="ct">ByLayer</span><span class="arrow"></span></div>
      <span class="sep sep8"></span>
      <div class="combo c119 off"><span class="ct ct-off">ByColor</span><span class="arrow arrow-off"></span></div>
    </div>
  </div>

  <main class="main">
    <aside class="vtb vtb-l">
      <span class="hgrip"></span>
      <svg class="vic"><use href="#line"/></svg><svg class="vic"><use href="#xline"/></svg><svg class="vic"><use href="#pline"/></svg><svg class="vic"><use href="#poly"/></svg><svg class="vic"><use href="#rect"/></svg><svg class="vic"><use href="#arc"/></svg><svg class="vic"><use href="#circ"/></svg><svg class="vic"><use href="#cloud"/></svg><svg class="vic"><use href="#spline"/></svg><svg class="vic"><use href="#ell"/></svg><svg class="vic"><use href="#elarc"/></svg><svg class="vic"><use href="#ins"/></svg><svg class="vic"><use href="#blk"/></svg><svg class="vic"><use href="#pt"/></svg><svg class="vic"><use href="#hat"/></svg><svg class="vic"><use href="#grad"/></svg><svg class="vic"><use href="#regn"/></svg><svg class="vic"><use href="#tbl"/></svg>
      <span class="bigA">A</span>
    </aside>

    <section class="center">
      <div class="workspace">
        <div class="canvas">
          <svg class="drawing" viewBox="27 99 1295 528">
            <rect x="446.500" y="189.500" width="581" height="411" class="w"/>
            <path d="M549 238.500h68M583.500 205v67" class="w"/><rect x="580.500" y="235.500" width="6" height="6" class="w"/>
            <!-- UCS icon -->
            <rect x="38.500" y="605.500" width="10" height="10" class="w"/>
            <path d="M48.500 610.500H93M43.500 605V561" class="w"/>
            <path d="M93.500 606.500l14 4-14 4zM38.500 560.500l5-13 5 13z" class="w"/>
            <path d="M96 610.500h7M43.500 556v-5" class="g1"/>
            <text x="38.500" y="540" class="ucs">Y</text><text x="114" y="617" class="ucs">X</text>

            <g transform="translate(510 290) scale(.33333)">
              <!-- front view -->
              <g class="cw">
                <path d="M113 295A147 147 0 0 1 407 295M185 295A74 74 0 0 1 333 295M40 252V295H185M333 295H475V252H402M118 252H40"/>
                <path d="M214 155V103A45 45 0 0 1 303 103V155"/><circle cx="259" cy="103" r="23"/>
                <!-- plan view -->
                <path d="M118 490H78A38 38 0 0 0 40 528V625A40 40 0 0 0 80 665H118V490M118 490H442A34 34 0 0 1 476 524V630A35 35 0 0 1 441 665H400V490M112 665V694H407V665M112 665H118M187 552H330V650H187ZM214 490V523H302V490"/>
                <circle cx="85" cy="533" r="23"/><circle cx="85" cy="622" r="23"/><circle cx="432" cy="533" r="23"/><circle cx="432" cy="622" r="23"/><circle cx="259" cy="602" r="23"/>
                <!-- side view -->
                <path d="M689 60H724V155H689ZM689 155V295H895V148H848V112M848 165H755V112M724 148H755M689 252H865V295M843 252V295M799 252V295"/>
              </g>
              <g class="cy">
                <path d="M190 166H330M236 166V230M281 166V230M64 252V295M108 252V295M410 252V295M455 252V295"/>
                <path d="M185 490V694M331 490V694M236 490V523M281 490V523"/>
                <path d="M689 82H724M689 128H724M689 220H780M825 220H895M780 165V220M825 165V220M780 220L800 225L825 220M712 252V295M755 252V295"/>
              </g>
              <g class="cr">
                <path d="M195 103H323M260 42V150M260 170V200M260 210V322M85 228V315M431 228V315"/>
                <path d="M259 460V722M226 602H290M52 533H118M85 505V560M52 622H118M85 594V650M400 533H462M432 505V560M400 622H462M432 594V650"/>
                <path d="M655 103H760M799 130V240M733 243V320M821 243V320"/>
              </g>
              <g class="cg">
                <path d="M85 315V350M431 315V350M85 350H431M40 295V388M475 295V388M40 385H475"/>
                <path d="M172 70H202L290 125M312 47H340M312 47L260 103M395 150H425M395 150L260 295M140 215H175L260 295"/>
                <path d="M733 318H821M689 340H865M689 366H895M689 295V370M865 295V345M895 295V370M755 118H848H895M755 142H799M830 130V165H848M690 42H724M690 42V60M724 42V60"/>
                <path d="M230 625L290 575H318M432 533L492 495H525M405 592L495 690H548"/>
              </g>
              <g class="gl">
                <text x="172" y="68">Ø15</text><text x="312" y="45">R15</text><text x="393" y="147">R50</text><text x="140" y="213">R25</text><text x="245" y="347">118</text><text x="242" y="384">148</text>
                <text x="703" y="41">12</text><text x="788" y="115">33</text><text x="860" y="115">16</text><text x="767" y="141">14</text><text x="817" y="162">5</text><text x="768" y="315">30</text><text x="767" y="339">60</text><text x="787" y="363">74</text>
                <text x="288" y="573">Ø16</text><text x="492" y="492">R15</text><text x="495" y="696">4XØ15</text>
              </g>
              <!-- isometric view -->
              <g class="cw">
                <path d="M650 600L662 550L685 515L717 480L712 440L720 405L740 382L760 376L785 385L803 410L805 442L775 470L740 490L717 480"/>
                <path d="M740 490L735 450L745 410L760 392L785 385"/><ellipse cx="771" cy="430" rx="15" ry="23" transform="rotate(15 771 430)"/>
                <path d="M808 443L875 470L905 465L940 470L985 495L1015 520L1015 550L1000 570L1003 598L950 622L945 600L925 585L895 590L870 610L845 660L840 685L790 710L768 700"/>
                <path d="M650 600L612 625L615 670L695 712L725 718L770 700L768 660L650 600M612 625L725 682L768 660M725 682V718"/>
                <ellipse cx="657" cy="628" rx="23" ry="12"/><ellipse cx="716" cy="660" rx="22" ry="12"/>
                <path d="M787 710L790 660L815 605L860 560L905 530L950 515L985 530L1000 570"/>
                <path d="M742 520L775 490L840 465L900 500L950 510M742 520L805 555L885 515L900 500"/>
                <ellipse cx="825" cy="510" rx="24" ry="14"/><path d="M892 480C905 472 930 476 932 488C930 498 910 502 898 496M955 512C965 505 990 512 992 522C990 532 978 536 970 532"/>
                <path d="M895 590L950 622"/>
              </g>
            </g>
            <text x="609" y="442" transform="rotate(-44 609 442)" class="wm">精诚网caxit.com</text>
          </svg>

          <div class="float">
            <div class="float-title"><span>标注</span><span class="float-x">×</span></div>
            <div class="float-body">
              <div class="btn"><svg class="ic"><use href="#dl"/></svg></div><div class="btn"><svg class="ic"><use href="#da"/></svg></div><div class="btn"><svg class="ic"><use href="#dar"/></svg></div><div class="btn"><svg class="ic"><use href="#dord"/></svg></div>
              <span class="sep"></span>
              <div class="btn"><svg class="ic"><use href="#drad"/></svg></div><div class="btn"><svg class="ic"><use href="#djog"/></svg></div><div class="btn"><svg class="ic"><use href="#ddia"/></svg></div><div class="btn"><svg class="ic"><use href="#dang"/></svg></div>
              <span class="sep"></span>
              <div class="btn"><svg class="ic"><use href="#dq"/></svg></div><div class="btn"><svg class="ic"><use href="#dbase"/></svg></div><div class="btn"><svg class="ic"><use href="#dcont"/></svg></div><div class="btn"><svg class="ic"><use href="#dsp"/></svg></div><div class="btn"><svg class="ic"><use href="#dbrk"/></svg></div>
              <span class="sep"></span>
              <div class="btn"><svg class="ic"><use href="#dtol"/></svg></div><div class="btn"><svg class="ic"><use href="#dcen"/></svg></div><div class="btn"><svg class="ic"><use href="#dins"/></svg></div><div class="btn"><svg class="ic"><use href="#djl"/></svg></div>
              <span class="sep"></span>
              <div class="btn"><svg class="ic"><use href="#dtxt"/></svg></div><div class="btn"><svg class="ic"><use href="#dedit"/></svg></div><div class="btn"><svg class="ic"><use href="#dupd"/></svg></div>
              <span class="sep"></span>
              <div class="combo c119"><span class="ct ct-iso">ISO-25</span><span class="arrow"></span></div>
              <div class="btn"><svg class="ic"><use href="#dstyle"/></svg></div>
            </div>
          </div>
        </div>
        <div class="vscroll">
          <span class="up"></span>
          <span class="vthumb"></span>
          <span class="down"></span>
        </div>
      </div>
      <div class="tabs">
        <div class="nav"><span class="nb"><i class="nfl"></i></span><span class="nb"><i class="nl"></i></span><span class="nb"><i class="nr"></i></span><span class="nb"><i class="nfr"></i></span></div>
        <span class="tab tab-on">Model</span><span class="tab t-w1">布局1</span><span class="tab t-w2">布局2</span><span class="tab t-w3">A3-CH ASSY</span><span class="tab t-w4">A3-EN ASSY</span>
        <span class="tab-fill"></span>
        <span class="hs-handle"></span>
        <div class="hscroll"><span class="hl"></span><span class="hthumb"></span><span class="hr"></span></div>
        <span class="corner"></span>
      </div>
    </section>

    <aside class="vtb vtb-r">
      <span class="hgrip"></span>
      <svg class="vic"><use href="#erase"/></svg><svg class="vic"><use href="#cpy"/></svg><svg class="vic"><use href="#mir"/></svg><svg class="vic"><use href="#off"/></svg><svg class="vic"><use href="#arr"/></svg><svg class="vic"><use href="#mov"/></svg><svg class="vic"><use href="#rot"/></svg><svg class="vic"><use href="#scl"/></svg><svg class="vic"><use href="#str"/></svg><svg class="vic"><use href="#trm"/></svg><svg class="vic"><use href="#ext"/></svg><svg class="vic"><use href="#br1"/></svg><svg class="vic"><use href="#br2"/></svg><svg class="vic"><use href="#joi"/></svg><svg class="vic"><use href="#chm"/></svg><svg class="vic"><use href="#fil"/></svg><svg class="vic"><use href="#exp"/></svg>
      <span class="vsep"></span>
      <span class="hgrip hgrip2"></span>
      <svg class="vic"><use href="#do1"/></svg><svg class="vic"><use href="#do2"/></svg><svg class="vic"><use href="#do3"/></svg><svg class="vic"><use href="#do4"/></svg>
    </aside>
  </main>

  <footer class="cmd">
    <div class="cmd-gap"></div>
    <div class="cmd-bar"></div>
    <div class="cmd-body">
      <span class="cmd-grip"></span>
      <div class="cmd-box">
        <span class="cmd-text">命令：指定对角点：</span>
        <div class="badge"><span class="bd-a">↑ 0.2KB/S &nbsp; ↓ 0.5KB/S</span><span class="bd-b">EN</span></div>
      </div>
      <div class="cmd-scroll"><span class="up"></span><span class="down"></span></div>
    </div>
  </footer>
</div>
</body>
</html>
```

FILE: styles.css
```css
* { box-sizing: border-box; }
html, body { margin: 0; padding: 0; }
body { width: 1365px; height: 683px; overflow: hidden; background: #f0f0f0; font-family: "Open Sans", "Noto Sans CJK SC", sans-serif; font-size: 12px; color: #000; }
.defs { position: absolute; width: 0; height: 0; }
.ict { font: bold 10px "Liberation Sans", sans-serif; fill: #222; }
.ict2 { font: 5px "Liberation Sans", sans-serif; fill: #1f5fa8; }
.ict3 { font: bold 9px "Liberation Sans", sans-serif; fill: #1f5a96; }
.ich { font: bold 16px "Liberation Sans", sans-serif; fill: #fff; text-anchor: middle; }
.ita { font: 17px "Liberation Serif", serif; fill: #222; }
.idt { font: bold 13px "Liberation Sans", sans-serif; fill: #1f5a96; text-anchor: middle; }

.app { display: flex; flex-direction: column; height: 683px; }

/* title bar */
.title { height: 21px; flex: none; display: flex; align-items: center; background: linear-gradient(#b9d6f4, #afd1f3); }
.title-icon { width: 15px; height: 15px; margin: 0 6px 0 0; flex: none; }
.title-text { font-size: 12.660px; color: #111; line-height: 21px; white-space: nowrap; }
.smudges { margin-left: auto; margin-right: 105px; flex: none; width: 282px; display: flex; gap: 14px; height: 12px; align-items: center; margin-top: 5px; }
.smudges i { width: 34px; height: 8px; background: #5d7896; filter: blur(3px); opacity: .32; }
.smudges .smg { background: #5f9d6f; width: 12px; margin-left: 16px; }
.wc { position: absolute; left: 1260px; top: 0; width: 104px; height: 18px; display: flex; border: 1px solid #4d5f70; border-top: 0; border-radius: 0 0 5px 5px; overflow: hidden; }
.wb { display: flex; align-items: center; justify-content: center; height: 100%; }
.wb-min { width: 29px; background: linear-gradient(#dbe7f3, #a9c2db); border-right: 1px solid #5c6f80; }
.wb-max { width: 29px; background: linear-gradient(#dbe7f3, #a9c2db); border-right: 1px solid #5c6f80; }
.wb-close { flex: 1; background: linear-gradient(#e79c8c, #c6402a 55%, #d86a4e); color: #fff; font: bold 13px "Liberation Sans", sans-serif; text-shadow: 0 0 2px #622; }
.minbar { width: 11px; height: 5px; border: 1px solid #333; background: #eef3f8; margin-top: 5px; }
.maxbox { width: 10px; height: 12px; border: 1px solid #333; background: #e8eef4; box-shadow: 2px -2px 0 -1px #e8eef4, 2px -2px 0 0 #333; }

/* menu */
.menu { height: 21px; flex: none; display: flex; align-items: center; position: relative; background: linear-gradient(#fdfdff, #cfd8ee); border-top: 1px solid #5d7089; }
.menu-icon { width: 18px; height: 20px; margin-left: 7px; flex: none; }
.mi { white-space: nowrap; font-size: 12px; color: #111; position: absolute; top: 0; line-height: 19px; }
.mi1 { left: 30px; } .mi2 { left: 82px; } .mi3 { left: 135px; } .mi4 { left: 189px; } .mi5 { left: 239px; } .mi6 { left: 295px; } .mi7 { left: 348px; } .mi8 { left: 403px; } .mi9 { left: 459px; } .mi10 { left: 517px; } .mi11 { left: 575px; } .mi12 { left: 631px; }
.help-box { margin-left: 949px; width: 267px; height: 20px; background: #fff; font: 10px/21px "Liberation Mono", monospace; color: #444; padding-left: 2px; flex: none; }
.help-tools { width: 64px; height: 20px; flex: none; display: flex; align-items: center; gap: 4px; padding-left: 2px; border: 1px solid #9bb0c8; border-radius: 0 0 5px 5px; background: linear-gradient(#f2f6fb, #ccdaeb); }
.ht { width: 15px; height: 15px; flex: none; }
.ht-drop { width: 0; height: 0; border: 2px solid transparent; border-top: 3px solid #333; margin: 2px -2px 0 -3px; flex: none; }
.ht-star { margin-left: 2px; }
.mdi { margin-left: 5px; display: flex; gap: 3px; flex: none; }
.mdb { width: 16px; height: 18px; background: linear-gradient(#dbe8f4, #b7cde2); border: 1px solid #9fb6cc; border-radius: 2px; position: relative; display: flex; align-items: center; justify-content: center; font: 12px "Liberation Sans", sans-serif; color: #444; }
.m-min { width: 6px; height: 2px; background: #555; margin-top: 6px; }
.m-res { width: 7px; height: 7px; border: 1px solid #555; box-shadow: 2px -2px 0 -1px #cfe, 2px -2px 0 0 #555; }

/* toolbars */
.row { height: 28px; flex: none; display: flex; gap: 2px; background: #f8f8f8; }
.tb { display: flex; align-items: center; height: 27px; padding-top: 5px; background: #f0f0f0; border-bottom: 2px solid #a8a8a8; border-right: 2px solid #b4b4b4; flex: none; }
.tb1 { width: 652px; }
.tb2 { width: 608px; }
.tb3 { width: 237px; }
.tb4 { width: 408px; }
.tb5 { width: 589px; }
.grip { width: 12.500px; height: 22px; flex: none; position: relative; }
.grip::before { content: ""; position: absolute; left: 4px; top: -2px; bottom: 0; width: 4px; border-left: 1px solid #a0a0a0; border-right: 1px solid #a0a0a0; }
.tb2 .grip { width: 10.500px; margin-left: 2px; }
.tb3 .grip { width: 14px; }
.tb4 .grip { width: 12.500px; }
.tb5 .grip { width: 14px; }
.tb2 .grip::before, .tb4 .grip::before, .tb5 .grip::before { left: 3px; }
.btn { width: 23px; height: 22px; flex: none; display: flex; align-items: center; justify-content: center; }
.btn24 { width: 24px; }
.ic { width: 20px; height: 20px; display: block; }
.sep { width: 6px; height: 24px; flex: none; position: relative; }
.sep::before { content: ""; position: absolute; left: 2.500px; top: 0; bottom: 0; width: 1px; background: #222; }
.sep8 { width: 8px; }
.sep8::before { left: 3.500px; }
.drop { width: 12px; flex: none; height: 20px; position: relative; }
.drop::before { content: ""; position: absolute; left: 3px; top: 7px; border: 3px solid transparent; border-top: 3px solid #123a6c; }
.drop-off::before { border-top-color: #bbb; }

.combo { height: 21px; flex: none; display: flex; align-items: center; background: #fff; border-radius: 3px; box-shadow: 0 0 0 1px #d8d8d8; padding: 0 5px 0 3px; position: relative; }
.cm { margin-left: 2.500px; }
.c118 { width: 118px; } .c119 { width: 119px; } .c120 { width: 120px; } .c125 { width: 125px; } .c149 { width: 149px; } .c157 { width: 157px; } .c173 { width: 173px; } .c299 { width: 299px; }
.ct { font: 10px/16px "Liberation Mono", "Noto Sans CJK SC", monospace; white-space: nowrap; color: #000; padding-top: 2px; }
.cjk { font: 12px/16px "Noto Sans CJK SC", sans-serif; }
.ct-std { margin-left: 15px; }
.ct-std2 { margin-left: 16px; }
.ct-iso { margin-left: 15px; }
.ct-tab { margin-left: 1px; }
.ct-ws { margin-left: 5px; }
.arrow { width: 0; height: 0; margin-left: auto; border: 4px solid transparent; border-top: 4px solid #111; border-bottom: 0; flex: none; }
.arrow-off { border-top-color: #aaa; }
.off { background: linear-gradient(90deg, #f0f0f0 100px, #fff 100px); }
.ct-off { color: #777; margin-left: 5px; }
.li { width: 16px; height: 16px; flex: none; }
.li-l { margin-left: 2px; }
.swatch { width: 10px; height: 10px; background: #00ff00; border: 1px solid #111; margin: 0 5px 0 0; flex: none; }
.swatch-c { margin: 0 4px 0 2px; }
.lt { height: 1px; background: #111; flex: none; margin: 0 6px 0 1px; }
.lt60 { width: 60px; }
.lt35 { width: 35px; }

/* main */
.main { flex: 1; min-height: 0; display: flex; height: 545px; border-top: 1px solid #bcbcbc; }
.vtb { width: 27px; flex: none; background: #f0f0f0; display: flex; flex-direction: column; align-items: center; }
.vtb-l { border-right: 3px solid; border-image: linear-gradient(90deg, #f5f5f5, #b0b0b0) 1; }
.vtb-r { padding-left: 3px; }
.hgrip { width: 22px; height: 10px; flex: none; position: relative; }
.hgrip::before { content: ""; position: absolute; left: 0; right: 0; top: 1px; height: 4px; border-top: 1px solid #a0a0a0; border-bottom: 1px solid #a0a0a0; }
.hgrip2 { height: 12px; }
.hgrip2::before { top: 5px; }
.vsep { align-self: stretch; height: 1px; margin-top: 5px; background: #999; flex: none; }
.vic { width: 20px; height: 20px; margin: 1px 0; flex: none; display: block; }
.bigA { font: 19px/22px "Liberation Sans", sans-serif; color: #111; height: 22px; }

.center { flex: 1; min-width: 0; display: flex; flex-direction: column; }
.workspace { flex: 1; min-height: 0; display: flex; }
.canvas { width: 1295px; height: 528px; background: #000; position: relative; flex: none; overflow: hidden; }
.drawing { position: absolute; inset: 0; width: 1295px; height: 528px; display: block; shape-rendering: crispEdges; }
.w { fill: none; stroke: #fff; stroke-width: 1; }
.g1 { fill: none; stroke: #888; stroke-width: 3; }
.ucs { font: 15px "Liberation Sans", sans-serif; fill: #ddd; }
.cw { fill: none; stroke: #fff; stroke-width: 3; }
.cy { fill: none; stroke: #ffff00; stroke-width: 3; stroke-dasharray: 18 10; }
.cr { fill: none; stroke: #ff0000; stroke-width: 3; }
.cg { fill: none; stroke: #00ff00; stroke-width: 3; }
.gl { font: bold 21px "Liberation Mono", monospace; fill: #00ff00; }
.wm { font: 300 32.500px "Open Sans", "Noto Sans CJK SC", sans-serif; fill: #f00000; letter-spacing: .3px; }

.float { position: absolute; left: 74px; top: 33px; width: 650px; height: 60px; border: 5px solid #4a4a4a; border-radius: 7px; background: #f0f0f0; box-shadow: 0 0 0 1px #888 inset; padding: 1px 1px 0 2px; }
.float-title { height: 18px; background: #9bb4d2; display: flex; align-items: center; justify-content: space-between; padding-left: 2px; font-size: 12px; line-height: 18px; color: #111; }
.float-x { width: 16px; height: 15px; background: #f0f0f0; border: 1px solid #888; font: bold 15px/12px "Liberation Sans", sans-serif; text-align: center; margin-right: 3px; }
.float-body { display: flex; align-items: center; height: 29px; padding-left: .5px; }
.float-body .combo { margin-left: .5px; height: 23px; }

.vscroll { flex: 1; background: #eeeeee; position: relative; border-left: 1px solid #f6f6f6; }
.up, .down { position: absolute; left: 4px; width: 0; height: 0; border: 4px solid transparent; }
.up { top: 7px; border-bottom: 4px solid #333; border-top: 0; }
.down { bottom: 6px; border-top: 4px solid #333; border-bottom: 0; }
.vthumb { position: absolute; left: 0; top: 134px; width: 15px; height: 15px; border: 1px solid #b5b5b5; border-radius: 2px; background: linear-gradient(90deg, #f8f8f8, #cfcfcf); }

/* tabs */
.tabs { height: 16px; flex: none; display: flex; align-items: stretch; background: #ededed; border-bottom: 1px solid #fff; }
.nav { width: 56px; margin-left: 1px; display: flex; flex: none; border: 1px solid #b4b4b4; border-width: 1px 0 2px 1px; }
.nb { flex: 1; border-right: 1px solid #c0c0c0; position: relative; }
.nb i { position: absolute; left: 3px; top: 2px; width: 0; height: 0; border: 4px solid transparent; }
.nl { border-right: 6px solid #555 !important; border-left: 0 !important; }
.nr { border-left: 6px solid #555 !important; border-right: 0 !important; left: 5px !important; }
.nfl { border-right: 6px solid #555 !important; border-left: 0 !important; left: 5px !important; box-shadow: -2px 0 0 -1px #555; }
.nfr { border-left: 6px solid #555 !important; border-right: 0 !important; }
.nfl::before, .nfr::before { content: ""; position: absolute; top: -4px; height: 8px; width: 1px; background: #555; }
.nfl::before { left: -2px; }
.nfr::before { left: 3px; }
.tab { font: 10px/17px "Liberation Mono", "Noto Sans CJK SC", monospace; padding-left: 6px; flex: none; position: relative; color: #111; border-bottom: 1px solid #888; overflow: visible; height: 15px; }
.tab::after { content: ""; position: absolute; right: 3px; top: 1px; bottom: 0; width: 1px; background: #777; transform: skewX(-28deg); }
.tab-on { width: 49px; margin-left: 2px; padding-left: 9px; color: #fff; background: #000; clip-path: polygon(0 0, 100% 0, 90% 100%, 10% 100%); border: 0; font-weight: bold; line-height: 16px; }
.tab-on::after { display: none; }
.t-w1 { width: 46px; }
.t-w1, .t-w2 { font-size: 11px; }
.t-w2 { width: 46px; }
.t-w3 { width: 76px; }
.t-w4 { width: 76px; }
.tab-fill { flex: 1; }
.hs-handle { width: 5px; height: 13px; margin-top: 1px; border: 1px solid #aaa; background: #fff; border-radius: 1px; flex: none; }
.hscroll { width: 435px; position: relative; flex: none; background: #ececec; }
.hl, .hr { position: absolute; top: 3px; width: 0; height: 0; border: 4px solid transparent; }
.hl { left: 5px; border-right: 4px solid #333; border-left: 0; }
.hr { right: 5px; border-left: 4px solid #333; border-right: 0; }
.hthumb { position: absolute; left: 241px; top: 0; width: 15px; height: 14px; border: 1px solid #aaa; border-radius: 2px; background: linear-gradient(#f8f8f8, #cdcdcd); }
.corner { width: 16px; flex: none; background: #f2f2f2; }

/* command */
.cmd { flex: none; height: 40px; display: flex; flex-direction: column; }
.cmd-gap { height: 5px; background: #fafafa; }
.cmd-bar { height: 12px; background: #f0f0f0; border-top: 1px solid #7d7d7d; }
.cmd-body { flex: 1; display: flex; background: #f0f0f0; min-height: 0; }
.cmd-grip { width: 16px; flex: none; position: relative; }
.cmd-grip::before { content: ""; position: absolute; left: 8px; top: 0; bottom: 0; width: 4px; border-left: 1px solid #aaa; border-right: 1px solid #aaa; }
.cmd-box { width: 1327px; flex: none; background: #fff; border-top: 2px solid #777; border-left: 1px solid #777; position: relative; }
.cmd-text { font: 15px/13px "Noto Sans CJK SC", sans-serif; color: #111; display: block; margin-left: 1px; }
.badge { position: absolute; left: 1111px; top: 13px; width: 205px; height: 20px; border-radius: 7px 7px 0 0; background: #5e9de8; display: flex; font: bold 10px/14px "Liberation Sans", sans-serif; color: #fff; overflow: hidden; padding-top: 2px; }
.bd-a { width: 167px; padding-left: 32px; }
.bd-b { flex: 1; background: #8cc0f0; border-left: 1px solid #fff; padding-left: 10px; margin-top: -2px; padding-top: 2px; }
.cmd-scroll { width: 15px; flex: none; position: relative; background: #f0f0f0; border-top: 2px solid #777; }
.cmd-scroll .up { top: 5px; left: 3px; }
.cmd-scroll .down { bottom: 3px; left: 3px; }
```
